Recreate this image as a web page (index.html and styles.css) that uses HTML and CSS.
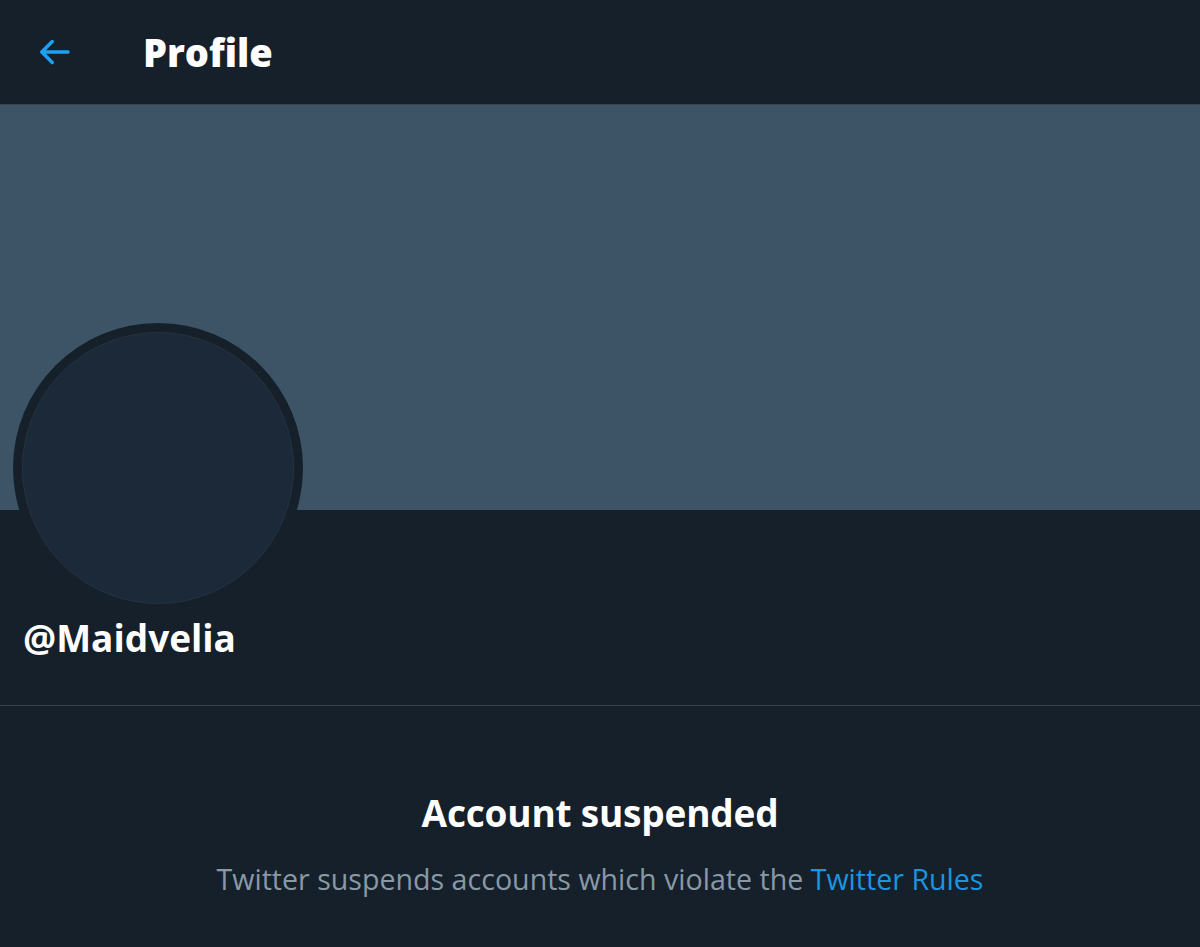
FILE: index.html
```html
<!DOCTYPE html>
<html>
<head>
<meta charset="utf-8">
<link rel="stylesheet" href="styles.css">
</head>
<body>
<div class="page">
  <header class="topbar">
    <div class="back">
      <svg viewBox="0 0 24 24" width="42" height="42"><path d="M20 11H7.414l4.293-4.293a1 1 0 0 0-1.414-1.414l-6 6a1 1 0 0 0 0 1.414l6 6a.996.996 0 0 0 1.414 0 1 1 0 0 0 0-1.414L7.414 13H20a1 1 0 1 0 0-2z" fill="#1da1f2"/></svg>
    </div>
    <h1 class="title">Profile</h1>
  </header>
  <div class="banner"></div>
  <section class="info">
    <div class="avatar"><div class="avatar-inner"></div></div>
    <div class="handle">@Maidvelia</div>
  </section>
  <section class="notice">
    <h2 class="notice-title">Account suspended</h2>
    <p class="notice-text">Twitter suspends accounts which violate the <a class="link" href="#">Twitter Rules</a></p>
  </section>
</div>
</body>
</html>
```
FILE: styles.css
```css
html, body { margin: 0; padding: 0; background: #15202b; }
body { font-family: "Open Sans", "Noto Sans", sans-serif; color: #fff; }
.page { width: 1200px; height: 947px; overflow: hidden; background: #15202b; }
.topbar { height: 104px; display: flex; align-items: center; border-bottom: 1px solid #38444d; }
.back { width: 42px; height: 42px; margin-left: 33px; display: flex; }
.title { margin: 0 0 0 68px; font-size: 38px; font-weight: 800; letter-spacing: 0; }
.banner { height: 405px; background: #3d5466; }
.info { display: flex; flex-direction: column; padding: 0 23px; height: 195px; border-bottom: 1px solid #38444d; }
.avatar { width: 290px; height: 290px; border-radius: 50%; background: #15202b; margin: -187px 0 0 -10px; display: flex; align-items: center; justify-content: center; flex-shrink: 0; }
.avatar-inner { width: 270px; height: 270px; border-radius: 50%; background: #1c2938; border: 1px solid #253341; }
.handle { font-size: 37px; font-weight: 700; line-height: 50px; }
.notice { text-align: center; padding-top: 82px; }
.notice-title { margin: 0; font-size: 37px; font-weight: 700; line-height: 50px; letter-spacing: -0.2px; }
.notice-text { margin: 21px 0 0; font-size: 28.6px; color: #8899a6; line-height: 40px; }
.link { color: #1b95e0; text-decoration: none; }
```
